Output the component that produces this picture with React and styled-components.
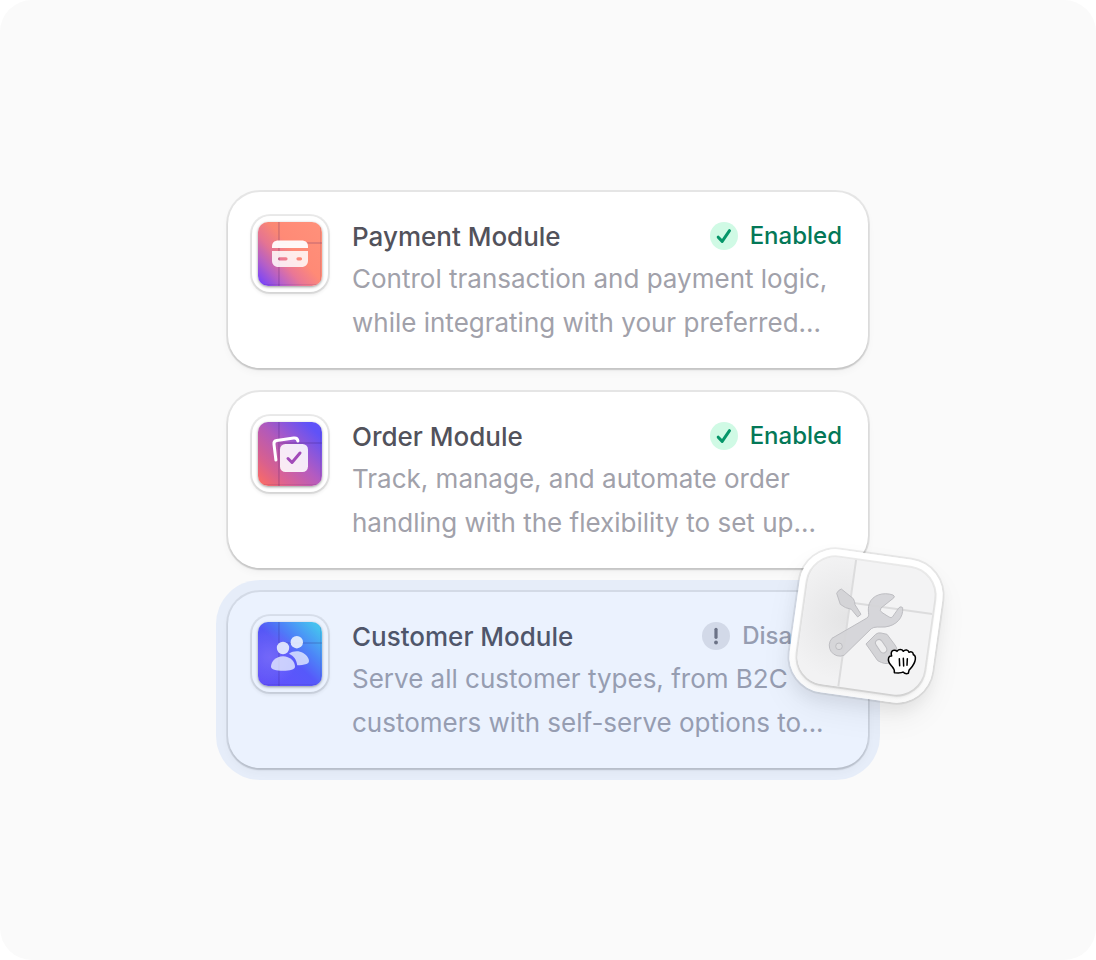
import React from 'react';
import styled, { createGlobalStyle } from 'styled-components';

const modules = [
  {
    id: 'payment',
    title: 'Payment Module',
    lines: ['Control transaction and payment logic,', 'while integrating with your preferred...'],
    enabled: true,
  },
  {
    id: 'order',
    title: 'Order Module',
    lines: ['Track, manage, and automate order', 'handling with the flexibility to set up...'],
    enabled: true,
  },
  {
    id: 'customer',
    title: 'Customer Module',
    lines: ['Serve all customer types, from B2C', 'customers with self-serve options to...'],
    enabled: false,
    selected: true,
  },
];

const tileColors = {
  payment: 'linear-gradient(48deg, #7a45ff 4%, #b45fd0 20%, #ea7795 38%, #ff8a76 56%, #ff917a 100%)',
  order: 'linear-gradient(45deg, #ff6f69 4%, #dd6292 24%, #b45bc0 52%, #5f52f8 88%)',
  customer:
    'radial-gradient(circle at 18% 55%, #7d68ff 0%, rgba(91, 84, 250, 0) 45%), linear-gradient(45deg, #6a4cff 0%, #5a55fb 48%, #4f88f8 68%, #47c8ef 92%)',
};

const PaymentIcon = () => (
  <>
    <path d='M14 26v-1.500c0-4 2.500-6 6.500-6h23c4 0 6.500 2 6.500 6V26z' fill='#fff' fillOpacity='.94' />
    <path
      fillRule='evenodd'
      d='M14 29h36v9.500c0 4-2.500 6.500-6.500 6.500h-23c-4 0-6.500-2.500-6.500-6.500zM21.500 35.200a1.500 1.500 0 0 0 0 3.200h6.500a1.500 1.500 0 0 0 0-3.200zM40 35.200a1.500 1.500 0 0 0 0 3.200h2.500a1.500 1.500 0 0 0 0-3.200z'
      fill='#fff'
      fillOpacity='.84'
    />
  </>
);

const OrderIcon = () => (
  <>
    <path
      d='M17.900 38 16 22.200c-.3-2.300.6-3.400 2.700-3.700l17-2.500c2.500-.3 3.900.6 4.200 3'
      fill='none'
      stroke='#fff'
      strokeWidth='3'
      strokeLinecap='round'
    />
    <rect x='22' y='22' width='28' height='28' rx='5.500' fill='#fff' fillOpacity='.88' />
    <path
      d='m30 36.500 4 4 8-9.500'
      fill='none'
      stroke='#a24bb9'
      strokeWidth='3'
      strokeLinecap='round'
      strokeLinejoin='round'
    />
  </>
);

const CustomerIcon = () => (
  <>
    <circle cx='25' cy='26' r='6.200' fill='#fff' fillOpacity='.88' />
    <circle cx='38.800' cy='20.200' r='6.200' fill='#fff' fillOpacity='.9' />
    <path d='M25 34.300c7 0 12 5.200 12 10.500 0 2.700-5 4-12 4s-12-1.300-12-4c0-5.300 5-10.500 12-10.500z' fill='#fff' fillOpacity='.76' />
    <path d='M31 31.800c6.500-4.700 15.500-2.300 19 4 1.500 3 1.500 5.200-1.500 6.200-2.800 1-6 1.300-9.300 1.300-.7-5.300-3.200-9.300-8.200-11.500z' fill='#fff' fillOpacity='.76' />
  </>
);

const tileIcons = { payment: PaymentIcon, order: OrderIcon, customer: CustomerIcon };

const ModuleTile = ({ id }) => {
  const Icon = tileIcons[id];

  return (
    <Frame>
      <Tile $background={tileColors[id]}>
        <svg width='64' height='64' viewBox='0 0 64 64' aria-hidden='true'>
          <path d='M0 0h21v64H0z' fill='#000' fillOpacity='.02' />
          <path d='M21 0v64M21 21H64' stroke='#30105c' strokeOpacity='.15' strokeWidth='2' />
          <path d='M1 62.500h62M62.500 1v62' stroke='#30105c' strokeOpacity='.1' />
          <Icon />
        </svg>
      </Tile>
    </Frame>
  );
};

const StatusIcon = ({ enabled }) => (
  <svg width='28' height='28' viewBox='0 0 28 28' aria-hidden='true'>
    <circle cx='14' cy='14' r='14' fill={enabled ? '#d0fae5' : '#e4e4e7'} />
    {enabled ? (
      <path d='m8.200 15.200 4 4.200 7.300-10.700' fill='none' stroke='#059669' strokeWidth='3' strokeLinecap='round' strokeLinejoin='round' />
    ) : (
      <>
        <path d='M14 7.300v8' stroke='#71717a' strokeWidth='3.200' strokeLinecap='round' />
        <circle cx='14' cy='20.500' r='1.900' fill='#71717a' />
      </>
    )}
  </svg>
);

const DraggedTile = () => (
  <DragFrame>
    <DragInner>
      <svg width='128' height='128' viewBox='0 0 128 128' aria-hidden='true'>
        <defs>
          <radialGradient id='fold' gradientUnits='userSpaceOnUse' cx='44' cy='60' r='62'>
            <stop offset='0' stopColor='#e4e4e5' />
            <stop offset='1' stopColor='#f2f2f3' />
          </radialGradient>
        </defs>
        <path d='M0 0h45v128H0z' fill='url(#fold)' />
        <path d='M45 0v128M45 43h83' stroke='#dcdcdd' strokeWidth='2' />
        <g transform='rotate(-8 64 64) translate(-22 -32) scale(.3333)' stroke='#bdbdc1' strokeWidth='3' fill='#d4d4d7'>
          <path d='M184 177q-9 3-14 13l11 33q14 12 33 15l19 23 10-8-18-29q0-9-5-18z' />
          <path
            fillOpacity='.92'
            d='M341 204q5-6-2-9c-29-10-62 0-71 26-8 24 4 35-7 43L156 325a32 32 0 0 0 36 51l82-80c8-7 26-4 41-5 34-4 56-28 53-58q-5-5-11 0l-19 27q-4 6-11 1l-22-14q-7-5-2-13z'
          />
          <circle cx='177' cy='349' r='10' fill='#dddddf' />
          <path d='m258 342 29-29q7-6 16-4l18 4 24 32q13 16-2 39l-12 14q-14 8-38-6z' />
          <rect x='293' y='327' width='21' height='44' rx='11' transform='rotate(-34 303 349)' fill='#eeeeef' />
        </g>
      </svg>
    </DragInner>
  </DragFrame>
);

const GrabCursor = () => (
  <CursorSvg viewBox='318 348 96 96' aria-hidden='true'>
    <path
      d='M343 428c2-11-5-16-10-22-7-8-9-16-7-23 2-6 5-5 9-5-3-9-1-16 6-17 5-1 8 1 10 3 5-7 15-7 19 0 5-6 15-5 17 3 7-4 13 0 13 7 5 1 7 5 6 14-2 16-12 24-19 33l-2 9c-6 2-11 1-16-4-5 4-14 3-26 2z'
      fill='#fff'
      stroke='#000'
      strokeWidth='4.500'
      strokeLinejoin='round'
    />
    <path d='m358 386 1 21m11-22 1 23m11-22-1 20' stroke='#000' strokeWidth='4.500' strokeLinecap='round' />
  </CursorSvg>
);

const App = () => (
  <>
    <GlobalStyle />
    <Page>
      <List>
        {modules.map(({ id, title, lines, enabled, selected }) => (
          <Card key={id} $selected={selected}>
            <ModuleTile id={id} />
            <Content>
              <Header>
                <Title>{title}</Title>
                <Status $enabled={enabled}>
                  <StatusIcon enabled={enabled} />
                  {enabled ? 'Enabled' : 'Disabled'}
                </Status>
              </Header>
              <Description>
                {lines[0]}
                <br />
                {lines[1]}
              </Description>
            </Content>
            {selected && (
              <DragLayer>
                <DraggedTile />
                <GrabCursor />
              </DragLayer>
            )}
          </Card>
        ))}
      </List>
    </Page>
  </>
);

const GlobalStyle = createGlobalStyle`
  * {
    box-sizing: border-box;
  }

  body {
    margin: 0;
    background: #fff;
    font-family: Inter, 'Liberation Sans', sans-serif;
    -webkit-font-smoothing: antialiased;
  }
`;

const Page = styled.main`
  display: flex;
  align-items: center;
  justify-content: center;
  min-height: 100vh;
  padding: 32px;
  background: #fafafa;
  border-radius: 32px;
`;

const List = styled.ul`
  display: flex;
  flex-direction: column;
  gap: 24px;
  width: 100%;
  max-width: 640px;
  margin: 0;
  padding: 0;
  list-style: none;
`;

const Card = styled.li`
  position: relative;
  display: flex;
  gap: 24px;
  padding: 24px;
  background: #fff;
  border-radius: 32px;
  box-shadow: 0 0 0 2px rgba(0, 0, 0, 0.08), 0 2px 2px rgba(0, 0, 0, 0.12), 0 4px 8px rgba(0, 0, 0, 0.04);

  &::after {
    content: '';
    display: ${(props) => (props.$selected ? 'block' : 'none')};
    position: absolute;
    inset: -12px;
    background: rgba(59, 130, 246, 0.1);
    border-radius: 44px;
  }
`;

const Frame = styled.div`
  flex: none;
  align-self: flex-start;
  padding: 6px;
  background: #fff;
  border-radius: 18px;
  box-shadow: 0 0 0 2px rgba(0, 0, 0, 0.08), 0 2px 4px rgba(0, 0, 0, 0.12);
`;

const Tile = styled.div`
  width: 64px;
  height: 64px;
  overflow: hidden;
  background: ${(props) => props.$background};
  border-radius: 10px;
  box-shadow: 0 1px 3px rgba(0, 0, 0, 0.4);

  svg {
    display: block;
  }
`;

const Content = styled.div`
  flex: 1;
  min-width: 0;
`;

const Header = styled.div`
  display: flex;
  align-items: center;
  justify-content: space-between;
  height: 40px;
  padding-right: 2px;
`;

const Title = styled.h2`
  margin: 0;
  padding-top: 2px;
  color: #52525b;
  font-size: 26px;
  font-weight: 500;
  line-height: 40px;
`;

const Status = styled.span`
  display: flex;
  align-items: center;
  gap: 12px;
  color: ${(props) => (props.$enabled ? '#047857' : '#a1a1aa')};
  font-size: 24px;
  font-weight: 500;
  line-height: 40px;
`;

const Description = styled.p`
  margin: 0;
  padding-top: 1px;
  margin-bottom: -1px;
  color: #a1a1aa;
  font-size: 26px;
  line-height: 44px;
  white-space: nowrap;
`;

const DragLayer = styled.div`
  position: absolute;
  z-index: 1;
  top: -38px;
  right: -70px;
`;

const DragFrame = styled.div`
  padding: 8px;
  background: linear-gradient(#fff 60%, #f8f8f8);
  border-radius: 36px;
  box-shadow: 0 0 0 2px rgba(0, 0, 0, 0.07), 0 8px 16px rgba(0, 0, 0, 0.06), 0 16px 32px rgba(0, 0, 0, 0.06);
  transform: rotate(8deg);
`;

const DragInner = styled.div`
  width: 128px;
  height: 128px;
  overflow: hidden;
  background: #f3f3f4;
  border-radius: 28px;
  box-shadow: 0 0 0 2px rgba(0, 0, 0, 0.08), 0 2px 4px rgba(0, 0, 0, 0.12);

  svg {
    display: block;
  }
`;

const CursorSvg = styled.svg`
  position: absolute;
  top: 92px;
  left: 92px;
  width: 32px;
  height: 32px;
`;

export default App;
